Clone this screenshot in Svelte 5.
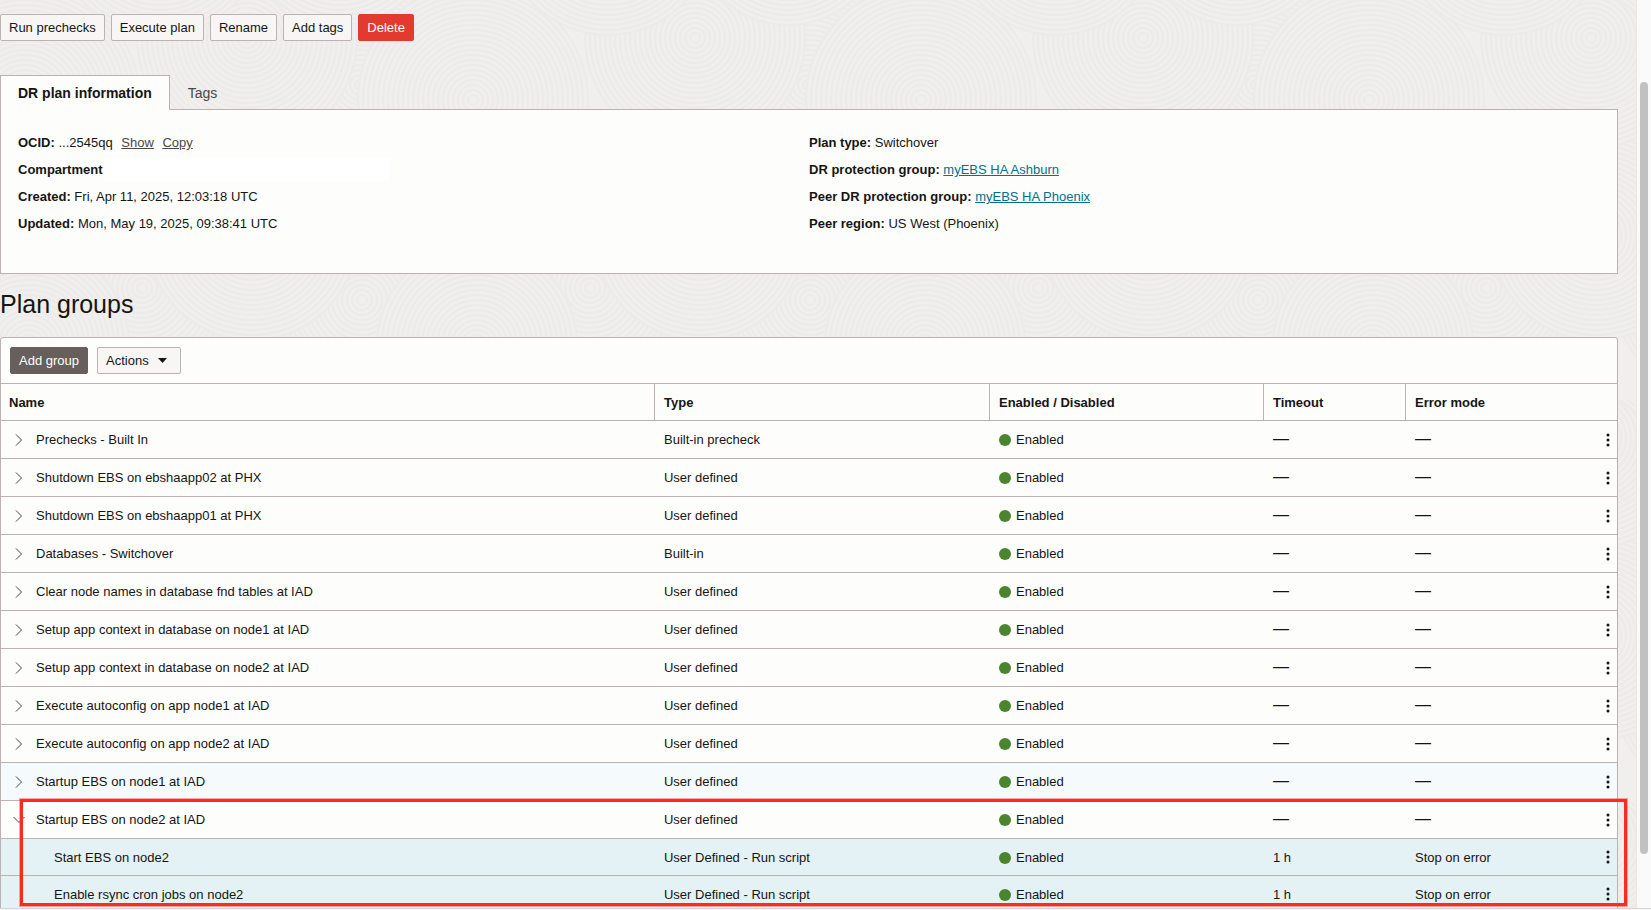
<!--
DR plan details
Plan information panel plus the table of plan groups and their steps.
-->

<script lang="ts">
  interface Row {
    name: string
    type: string
    child?: boolean
    open?: boolean
    hover?: boolean
    timeout?: string
    errorMode?: string
  }

  let tab = $state('info')

  const rows: Row[] = [
    { name: 'Prechecks - Built In', type: 'Built-in precheck' },
    { name: 'Shutdown EBS on ebshaapp02 at PHX', type: 'User defined' },
    { name: 'Shutdown EBS on ebshaapp01 at PHX', type: 'User defined' },
    { name: 'Databases - Switchover', type: 'Built-in' },
    { name: 'Clear node names in database fnd tables at IAD', type: 'User defined' },
    { name: 'Setup app context in database on node1 at IAD', type: 'User defined' },
    { name: 'Setup app context in database on node2 at IAD', type: 'User defined' },
    { name: 'Execute autoconfig on app node1 at IAD', type: 'User defined' },
    { name: 'Execute autoconfig on app node2 at IAD', type: 'User defined' },
    { name: 'Startup EBS on node1 at IAD', type: 'User defined', hover: true },
    { name: 'Startup EBS on node2 at IAD', type: 'User defined', open: true },
    { name: 'Start EBS on node2', type: 'User Defined - Run script', child: true, timeout: '1 h', errorMode: 'Stop on error' },
    { name: 'Enable rsync cron jobs on node2', type: 'User Defined - Run script', child: true, timeout: '1 h', errorMode: 'Stop on error' },
  ]

  // Ripple texture: overlapping discs, later ones cover earlier ones
  const discs = [
    { x: 360, y: 85, r: 110 },
    { x: 142, y: 288, r: 90 },
    { x: 362, y: 300, r: 90 },
    { x: 29, y: 345, r: 100 },
    { x: 477, y: 345, r: 100 },
    { x: 252, y: 235, r: 105 },
    { x: 247, y: 38, r: 110 },
    { x: 25, y: 100, r: 115 },
    { x: 473, y: 100, r: 115 },
    { x: 160, y: -70, r: 105 },
    { x: 340, y: -70, r: 95 },
  ]
  const rings = (r: number) => Array.from({ length: Math.floor(r / 5) }, (_, i) => r - i * 5)
</script>

<div class="viewport">
  <svg class="texture" aria-hidden="true">
    <defs>
      <pattern id="ripples" width="448" height="400" patternUnits="userSpaceOnUse">
        {#each discs as d}
          {#each rings(d.r) as r}
            <circle cx={d.x} cy={d.y} {r} fill="#f0efed" stroke="#ecebe9" stroke-width="2" />
          {/each}
        {/each}
      </pattern>
    </defs>
    <rect width="100%" height="100%" fill="url(#ripples)" />
  </svg>

  <main>
    <div class="actions">
      <button class="btn">Run prechecks</button>
      <button class="btn">Execute plan</button>
      <button class="btn">Rename</button>
      <button class="btn">Add tags</button>
      <button class="btn danger">Delete</button>
    </div>

    <div class="tabs" role="tablist">
      <button role="tab" class="tab" class:active={tab === 'info'} aria-selected={tab === 'info'} onclick={() => (tab = 'info')}>DR plan information</button>
      <button role="tab" class="tab" class:active={tab === 'tags'} aria-selected={tab === 'tags'} onclick={() => (tab = 'tags')}>Tags</button>
    </div>

    <section class="panel info">
      <div class="fields">
        <p><b>OCID:</b> ...2545qq <a class="plain" href="#show">Show</a> <a class="plain" href="#copy">Copy</a></p>
        <p class="compartment"><b>Compartment</b><span class="blank"></span></p>
        <p><b>Created:</b> Fri, Apr 11, 2025, 12:03:18 UTC</p>
        <p><b>Updated:</b> Mon, May 19, 2025, 09:38:41 UTC</p>
      </div>
      <div class="fields">
        <p><b>Plan type:</b> Switchover</p>
        <p><b>DR protection group:</b> <a href="#ashburn">myEBS HA Ashburn</a></p>
        <p><b>Peer DR protection group:</b> <a href="#phoenix">myEBS HA Phoenix</a></p>
        <p><b>Peer region:</b> US West (Phoenix)</p>
      </div>
    </section>

    <h2>Plan groups</h2>

    <section class="panel groups">
      <div class="toolbar">
        <button class="btn primary">Add group</button>
        <button class="btn menu">
          Actions
          <svg width="9" height="5" viewBox="0 0 9 5" aria-hidden="true"><path d="M0 0h9L4.5 5z" fill="#161513" /></svg>
        </button>
      </div>

      <table>
        <colgroup>
          <col />
          <col class="col-type" />
          <col class="col-state" />
          <col class="col-timeout" />
          <col class="col-error" />
          <col class="col-menu" />
        </colgroup>
        <thead>
          <tr>
            <th>Name</th>
            <th>Type</th>
            <th>Enabled / Disabled</th>
            <th>Timeout</th>
            <th colspan="2">Error mode</th>
          </tr>
        </thead>
        <tbody>
          {#each rows as row}
            <tr class:child={row.child} class:hover={row.hover}>
              <td>
                <div class="name">
                  {#if !row.child}
                    <button class="expander" class:open={row.open} aria-label="Toggle {row.name}" aria-expanded={!!row.open}>
                      <svg width="8" height="12" viewBox="0 0 8 12" aria-hidden="true">
                        <path d="M1 .5 6.5 6 1 11.5" fill="none" stroke="#4a4745" />
                      </svg>
                    </button>
                  {/if}
                  <span>{row.name}</span>
                </div>
              </td>
              <td>{row.type}</td>
              <td><span class="state"><i class="dot"></i>Enabled</span></td>
              <td>{#if row.timeout}{row.timeout}{:else}<span class="dash">—</span>{/if}</td>
              <td>{#if row.errorMode}{row.errorMode}{:else}<span class="dash">—</span>{/if}</td>
              <td class="menu-cell">
                <button class="kebab" aria-label="Actions for {row.name}">
                  <svg width="4" height="14" viewBox="0 0 4 14" fill="#161513" aria-hidden="true">
                    <circle cx="2" cy="2" r="1.5" />
                    <circle cx="2" cy="7" r="1.5" />
                    <circle cx="2" cy="12" r="1.5" />
                  </svg>
                </button>
              </td>
            </tr>
          {/each}
        </tbody>
      </table>
    </section>
  </main>

  <div class="scrollbar"><div class="thumb"></div></div>
  <div class="highlight"></div>
</div>

<style>
  :global(body) {
    background: #f5f4f2;
  }

  .viewport {
    position: relative;
    display: flex;
    box-sizing: border-box;
    height: calc(100vh - 1px);
    overflow: hidden;
    border-bottom: 1px solid #d8d7d5;
    background: #f0efed;
    color: #161513;
    font: 13px/18px 'Liberation Sans', Arial, sans-serif;
  }

  .texture {
    position: absolute;
    width: 100%;
    height: 100%;
  }

  main {
    position: relative;
    flex: 1;
    min-width: 0;
    padding: 14px 18px 0 0;
  }

  button {
    font: inherit;
    color: inherit;
    cursor: pointer;
  }

  .actions {
    display: flex;
    gap: 6px;
    margin-bottom: 34px;
  }

  .btn {
    height: 27px;
    padding: 0 8px;
    border: 1px solid #bbb3b1;
    border-radius: 2px;
    background: #f8f6f5;
    white-space: nowrap;
  }

  .danger {
    border-color: #e23a30;
    background: #e23a30;
    color: #fff;
  }

  .primary {
    border-color: #665f5b;
    background: #665f5b;
    color: #fff;
  }

  .menu {
    display: flex;
    align-items: center;
    gap: 9px;
    padding-right: 13px;
  }

  /* Tabs */
  .tabs {
    position: relative;
    z-index: 1;
    display: flex;
    margin-bottom: -1px;
  }

  .tab {
    height: 35px;
    padding: 0 17px;
    border: 1px solid transparent;
    border-bottom: 0;
    background: none;
    color: #4a4745;
    font-size: 14px;
  }

  .tab.active {
    border-color: #bbb3b1;
    background: #fdfdfb;
    color: #161513;
    font-weight: bold;
  }

  .panel {
    border: 1px solid #bbb3b1;
    background: #fdfdfb;
  }

  .info {
    display: grid;
    grid-template-columns: 1fr 1fr;
    padding: 19px 17px 36px;
  }

  .fields p {
    margin: 0;
    line-height: 27px;
  }

  .compartment {
    display: flex;
    align-items: center;
  }

  .blank {
    width: 287px;
    height: 23px;
    background: #fff;
  }

  a {
    color: #00708f;
  }

  a.plain {
    margin-left: 5px;
    color: #4a4745;
  }

  h2 {
    margin: 15px 0 18px;
    font-size: 25px;
    font-weight: normal;
    line-height: 30px;
  }

  /* Plan groups table */
  .groups {
    border-radius: 3px 3px 0 0;
  }

  .toolbar {
    display: flex;
    gap: 9px;
    padding: 9px;
  }

  table {
    width: 100%;
    table-layout: fixed;
    border-spacing: 0;
  }

  .col-type {
    width: 335px;
  }

  .col-state {
    width: 274px;
  }

  .col-timeout {
    width: 142px;
  }

  .col-error {
    width: 180px;
  }

  .col-menu {
    width: 32px;
  }

  th,
  td {
    box-sizing: border-box;
    height: 38px;
    padding: 0 8px;
    border-top: 1px solid #bbb3b1;
    text-align: left;
    white-space: nowrap;
  }

  th {
    height: 37px;
    padding-top: 2px;
  }

  th + th {
    padding-left: 9px;
    border-left: 1px solid #bbb3b1;
  }

  td + td {
    padding-left: 10px;
  }

  .hover td {
    background: #f5fafd;
  }

  .child td {
    height: 37px;
    padding-top: 2px;
    background: #e4f1f5;
  }

  .name {
    display: flex;
    align-items: center;
  }

  .child .name {
    padding-left: 45px;
  }

  .expander {
    display: flex;
    align-items: center;
    justify-content: center;
    width: 20px;
    height: 18px;
    margin-right: 7px;
    padding: 0;
    border: 0;
    background: none;
  }

  .open svg {
    transform: rotate(90deg);
  }

  .state {
    display: flex;
    align-items: center;
    gap: 5px;
  }

  .dot {
    width: 12px;
    height: 12px;
    border-radius: 50%;
    background: #4a842e;
  }

  .dash {
    font-size: 16px;
  }

  td.menu-cell {
    padding: 0 7px 0 0;
  }

  .kebab {
    display: flex;
    margin-left: auto;
    padding: 0;
    border: 0;
    background: none;
  }

  .scrollbar {
    position: relative;
    box-sizing: border-box;
    width: 15px;
    padding: 82px 3px 54px;
    border-left: 1px solid #e8e8e8;
    background: #fafafa;
  }

  .thumb {
    height: 100%;
    border-radius: 4px;
    background: #c1c1c1;
  }

  .highlight {
    position: absolute;
    right: 24px;
    bottom: 2px;
    left: 20px;
    height: 107px;
    box-sizing: border-box;
    border: 3px solid #ff2a1f;
    box-shadow: 0 0 0 1px rgba(255, 42, 31, 0.4);
    pointer-events: none;
  }
</style>
